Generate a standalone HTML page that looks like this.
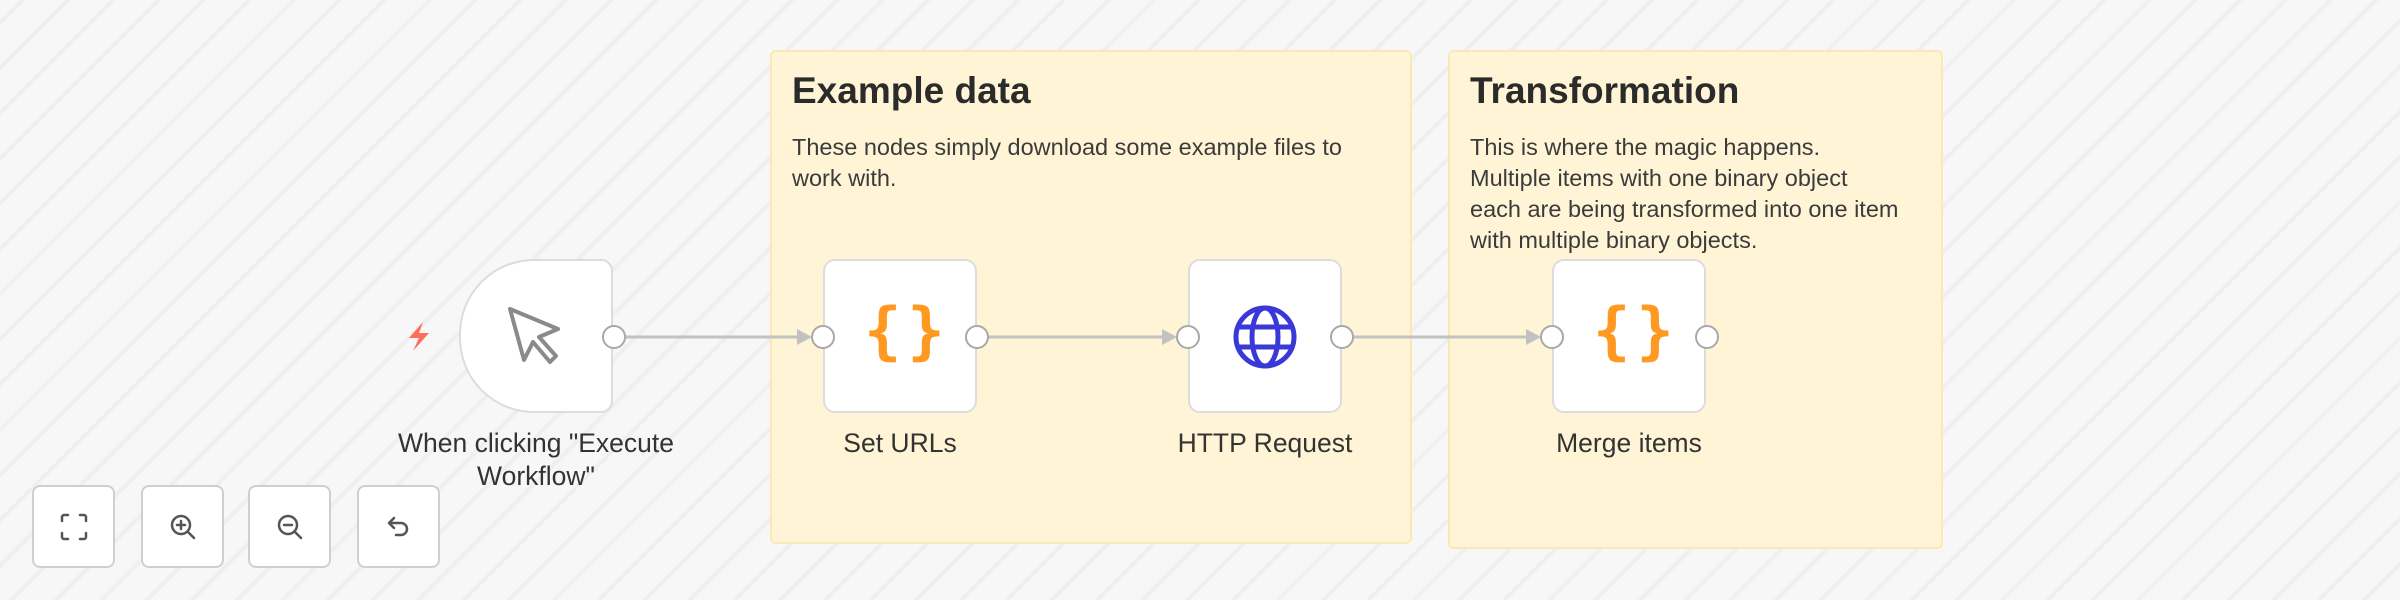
<!DOCTYPE html>
<html><head><style>
body{margin:0;width:2400px;height:600px;overflow:hidden;font-family:"Liberation Sans",sans-serif;
background-color:#f5f5f5;
background-image:repeating-linear-gradient(135deg,#f7f7f7 0 14px,#efefef 14px 18px,#f7f7f7 18px 32px);}
.sticky{position:absolute;background:#fff5d6;border:2px solid #fbe9b5;border-radius:6px;box-sizing:border-box;}
.sticky h1{margin:0;position:absolute;left:20px;top:18px;font-size:37px;font-weight:bold;color:#2b2b2b;}
.sticky p{margin:0;position:absolute;left:20px;top:80px;font-size:23.5px;line-height:31px;color:#3b3b3b;white-space:nowrap;}
.node{position:absolute;width:154px;height:154px;background:#fff;border:2px solid #dcdcdc;border-radius:12px;box-sizing:border-box;top:259px;}
.h{position:absolute;width:24px;height:24px;border-radius:50%;background:#fff;border:2px solid #a8a8a8;box-sizing:border-box;top:325px;}
.lbl{position:absolute;font-size:26.5px;color:#333;text-align:center;width:340px;line-height:33px;}
.btn{position:absolute;top:485px;width:83px;height:83px;background:#fff;border:2px solid #cfcfcf;border-radius:8px;box-sizing:border-box;display:flex;align-items:center;justify-content:center;}
</style></head><body>
<div class="sticky" style="left:770px;top:50px;width:642px;height:494px">
<h1>Example data</h1>
<p>These nodes simply download some example files to<br>work with.</p></div>
<div class="sticky" style="left:1448px;top:50px;width:495px;height:499px">
<h1>Transformation</h1>
<p>This is where the magic happens.<br>Multiple items with one binary object<br>each are being transformed into one item<br>with multiple binary objects.</p></div>

<svg style="position:absolute;left:0;top:0" width="2400" height="600">
<g stroke="#c2c2c2" stroke-width="3"><line x1="614" y1="337" x2="805" y2="337"/><line x1="977" y1="337" x2="1170" y2="337"/><line x1="1342" y1="337" x2="1534" y2="337"/></g>
<g fill="#c2c2c2"><path d="M797 329 L812 337 L797 345Z"/><path d="M1162 329 L1177 337 L1162 345Z"/><path d="M1526 329 L1541 337 L1526 345Z"/></g>
<path d="M423 322 L409 338 L419 338 L413 351 L429 333 L419 333 Z" fill="#ff6d5a"/>
</svg>

<div class="node" style="left:459px;border-radius:75px 12px 12px 75px"></div>
<svg style="position:absolute;left:505px;top:304px" width="64" height="68" viewBox="0 0 64 68"><path d="M5 5 L19 56 L28 38 L45 58 L51 52 L34 33 L53 25 Z" fill="none" stroke="#8a8a8a" stroke-width="4" stroke-linejoin="round"/></svg>
<div class="node" style="left:823px"></div>
<div class="node" style="left:1188px"></div>
<div class="node" style="left:1552px"></div>
<div style="position:absolute;left:864px;top:294px;font:bold 62px 'DejaVu Sans Mono',monospace;color:#ff9922;letter-spacing:6px">{}</div>
<div style="position:absolute;left:1593px;top:294px;font:bold 62px 'DejaVu Sans Mono',monospace;color:#ff9922;letter-spacing:6px">{}</div>
<svg style="position:absolute;left:1232px;top:304px" width="66" height="66" viewBox="0 0 66 66" fill="none" stroke="#3939d9" stroke-width="5"><circle cx="33" cy="33" r="29"/><ellipse cx="33" cy="33" rx="13" ry="29"/><line x1="6" y1="23" x2="60" y2="23"/><line x1="6" y1="43" x2="60" y2="43"/></svg>

<div class="h" style="left:602px"></div>
<div class="h" style="left:811px"></div><div class="h" style="left:965px"></div>
<div class="h" style="left:1176px"></div><div class="h" style="left:1330px"></div>
<div class="h" style="left:1540px"></div><div class="h" style="left:1695px"></div>

<div class="lbl" style="left:366px;top:427px">When clicking "Execute<br>Workflow"</div>
<div class="lbl" style="left:730px;top:427px">Set URLs</div>
<div class="lbl" style="left:1095px;top:427px">HTTP Request</div>
<div class="lbl" style="left:1459px;top:427px">Merge items</div>

<div class="btn" style="left:32px"><svg width="30" height="30" fill="none" stroke="#555" stroke-width="2.5" stroke-linecap="round"><path d="M3 9V5a2 2 0 0 1 2-2h4M21 3h4a2 2 0 0 1 2 2v4M27 21v4a2 2 0 0 1-2 2h-4M9 27H5a2 2 0 0 1-2-2v-4"/></svg></div>
<div class="btn" style="left:141px"><svg width="30" height="30" fill="none" stroke="#555" stroke-width="2.5" stroke-linecap="round"><circle cx="13" cy="13" r="9"/><path d="M20 20l6 6M13 9v8M9 13h8"/></svg></div>
<div class="btn" style="left:248px"><svg width="30" height="30" fill="none" stroke="#555" stroke-width="2.5" stroke-linecap="round"><circle cx="13" cy="13" r="9"/><path d="M20 20l6 6M9 13h8"/></svg></div>
<div class="btn" style="left:357px"><svg width="30" height="30" fill="none" stroke="#555" stroke-width="2.5" stroke-linecap="round" stroke-linejoin="round"><path d="M10 6L5 11l5 5M5 11h12a6 6 0 0 1 0 12h-5"/></svg></div>
</body></html>
